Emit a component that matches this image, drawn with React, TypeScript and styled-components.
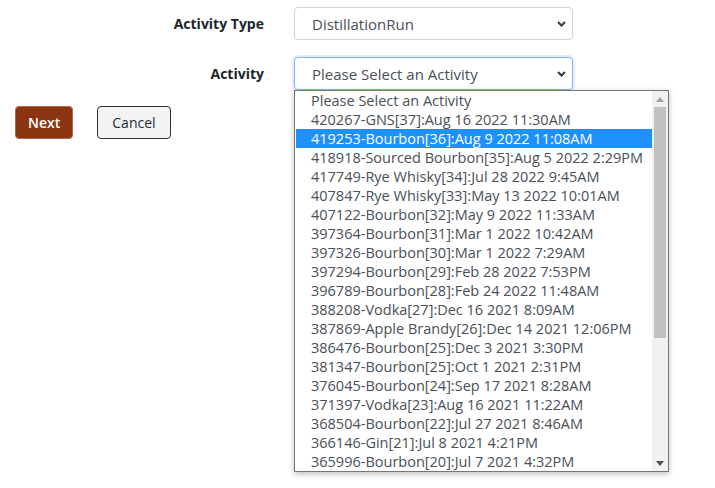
import React from "react";
import styled, { createGlobalStyle } from "styled-components";

const activities = [
  "Please Select an Activity",
  "420267-GNS[37]:Aug 16 2022 11:30AM",
  "419253-Bourbon[36]:Aug 9 2022 11:08AM",
  "418918-Sourced Bourbon[35]:Aug 5 2022 2:29PM",
  "417749-Rye Whisky[34]:Jul 28 2022 9:45AM",
  "407847-Rye Whisky[33]:May 13 2022 10:01AM",
  "407122-Bourbon[32]:May 9 2022 11:33AM",
  "397364-Bourbon[31]:Mar 1 2022 10:42AM",
  "397326-Bourbon[30]:Mar 1 2022 7:29AM",
  "397294-Bourbon[29]:Feb 28 2022 7:53PM",
  "396789-Bourbon[28]:Feb 24 2022 11:48AM",
  "388208-Vodka[27]:Dec 16 2021 8:09AM",
  "387869-Apple Brandy[26]:Dec 14 2021 12:06PM",
  "386476-Bourbon[25]:Dec 3 2021 3:30PM",
  "381347-Bourbon[25]:Oct 1 2021 2:31PM",
  "376045-Bourbon[24]:Sep 17 2021 8:28AM",
  "371397-Vodka[23]:Aug 16 2021 11:22AM",
  "368504-Bourbon[22]:Jul 27 2021 8:46AM",
  "366146-Gin[21]:Jul 8 2021 4:21PM",
  "365996-Bourbon[20]:Jul 7 2021 4:32PM",
];

const GlobalStyle = createGlobalStyle`
  body {
    margin: 0;
    background: #fff;
    font-family: "Open Sans", "Liberation Sans", sans-serif;
    color: #212529;
  }
`;

const Page = styled.div`
  padding-top: 7px;
  min-height: 488px;
  box-sizing: border-box;
`;

const FormRow = styled.div`
  display: grid;
  grid-template-columns: 264px 279px;
  column-gap: 30px;
  align-items: center;
  margin-bottom: 17px;
`;

const Label = styled.label`
  text-align: right;
  font-weight: 700;
  font-size: 14px;
  color: #212529;
`;

const SelectWrap = styled.div`
  position: relative;
`;

const SelectBox = styled.div<{ $focused?: boolean }>`
  height: 33px;
  box-sizing: border-box;
  display: flex;
  align-items: center;
  justify-content: space-between;
  padding: 0 6px 0 17px;
  border: 1px solid ${(p) => (p.$focused ? "#86b7fe" : "#ced4da")};
  border-radius: 4px;
  background: #fff;
  font-size: 15px;
  color: #495057;
  box-shadow: ${(p) =>
    p.$focused ? "0 0 0 2px rgba(13, 110, 253, 0.12)" : "none"};
`;

const Dropdown = styled.div`
  position: absolute;
  top: 33px;
  left: 0;
  width: 375px;
  height: 382px;
  box-sizing: border-box;
  border: 1px solid #767676;
  background: #fff;
  box-shadow: 0 2px 6px rgba(0, 0, 0, 0.25);
  display: flex;
  z-index: 2;
`;

const OptionList = styled.div`
  flex: 1;
  overflow: hidden;
  padding: 0 0 0 1px;
`;

const Option = styled.div<{ $selected?: boolean }>`
  height: 19px;
  line-height: 19px;
  padding-left: 15px;
  font-size: 14.5px;
  white-space: nowrap;
  color: ${(p) => (p.$selected ? "#fff" : "#495057")};
  background: ${(p) => (p.$selected ? "#1e90ff" : "transparent")};
`;

const Scrollbar = styled.div`
  width: 16px;
  background: #f1f1f1;
  display: flex;
  flex-direction: column;
`;

const ScrollArrow = styled.div`
  height: 16px;
  display: flex;
  align-items: center;
  justify-content: center;
`;

const Track = styled.div`
  flex: 1;
  padding: 0 2px;
`;

const Thumb = styled.div`
  height: 231px;
  background: #c1c1c1;
`;

const ButtonRow = styled.div`
  display: flex;
  gap: 24px;
  padding-left: 15px;
  margin-top: -1px;
`;

const Button = styled.button<{ $primary?: boolean }>`
  height: 33px;
  padding: 0 ${(p) => (p.$primary ? 12 : 14)}px;
  font-family: "Open Sans", "Liberation Sans", sans-serif;
  font-size: 14px;
  font-weight: ${(p) => (p.$primary ? 600 : 500)};
  border-radius: 4px;
  border: 1px solid ${(p) => (p.$primary ? "#b0674a" : "#2b2f33")};
  background: ${(p) => (p.$primary ? "#8b3412" : "#f3f3f3")};
  color: ${(p) => (p.$primary ? "#fff" : "#1d2b3a")};
`;

const Chevron = () => (
  <svg width="9" height="6" viewBox="0 0 9 6">
    <path d="M1 1 L4.5 4.5 L8 1" fill="none" stroke="#343a40" strokeWidth="2" />
  </svg>
);

const Triangle = ({ up }: { up?: boolean }) => (
  <svg width="8" height="5" viewBox="0 0 8 5">
    <path d={up ? "M0 5 L4 0 L8 5 Z" : "M0 0 L4 5 L8 0 Z"} fill={up ? "#a3a3a3" : "#505050"} />
  </svg>
);

export default function App() {
  return (
    <Page>
      <GlobalStyle />
      <FormRow>
        <Label>Activity Type</Label>
        <SelectWrap>
          <SelectBox>
            <span>DistillationRun</span>
            <Chevron />
          </SelectBox>
        </SelectWrap>
      </FormRow>
      <FormRow>
        <Label>Activity</Label>
        <SelectWrap>
          <SelectBox $focused>
            <span>Please Select an Activity</span>
            <Chevron />
          </SelectBox>
          <Dropdown>
            <OptionList>
              {activities.map((a, i) => (
                <Option key={a} $selected={i === 2}>
                  {a}
                </Option>
              ))}
            </OptionList>
            <Scrollbar>
              <ScrollArrow>
                <Triangle up />
              </ScrollArrow>
              <Track>
                <Thumb />
              </Track>
              <ScrollArrow>
                <Triangle />
              </ScrollArrow>
            </Scrollbar>
          </Dropdown>
        </SelectWrap>
      </FormRow>
      <ButtonRow>
        <Button $primary>Next</Button>
        <Button>Cancel</Button>
      </ButtonRow>
    </Page>
  );
}
